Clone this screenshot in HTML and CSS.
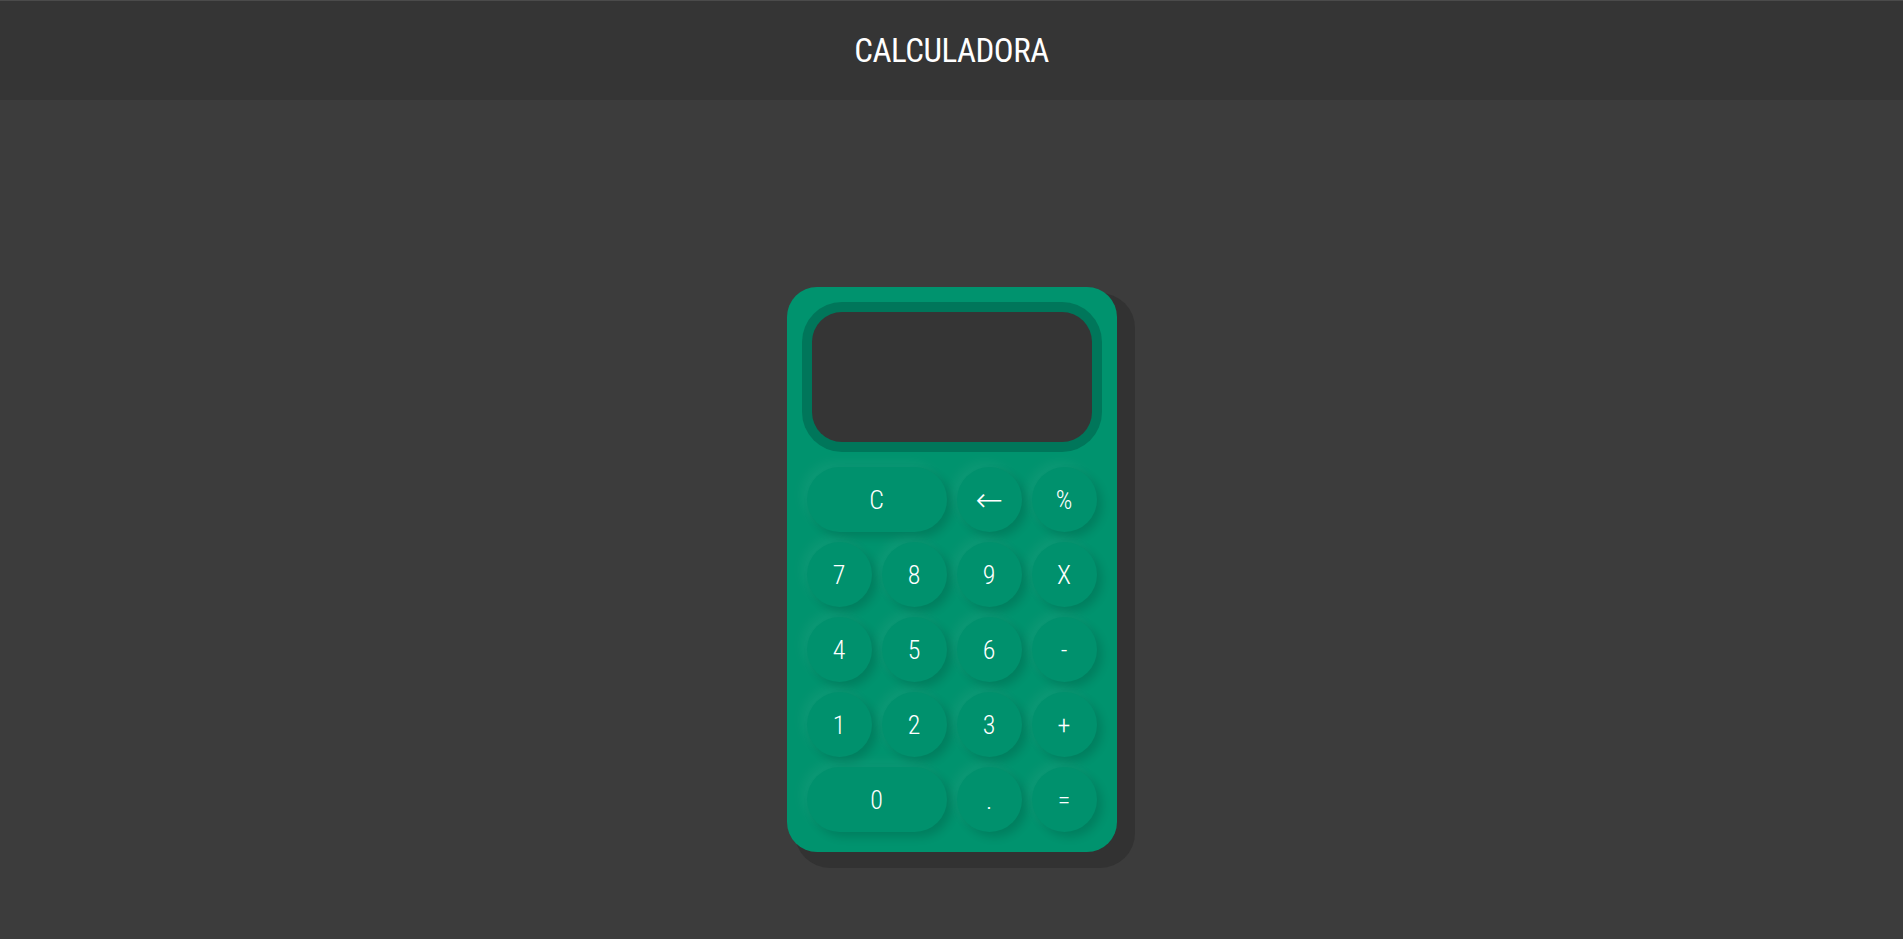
FILE: index.html
```html
<!DOCTYPE html>
<html lang="pt">
<head>
<meta charset="utf-8">
<title>Calculadora</title>
<link rel="stylesheet" href="styles.css">
</head>
<body>
<header class="topbar">
  <h1 class="title">CALCULADORA</h1>
</header>
<main class="stage">
  <div class="calc">
    <div class="screen-ring">
      <div class="screen"></div>
    </div>
    <div class="keys">
      <button class="key wide">C</button>
      <button class="key arrow">&larr;</button>
      <button class="key">%</button>
      <button class="key">7</button>
      <button class="key">8</button>
      <button class="key">9</button>
      <button class="key">X</button>
      <button class="key">4</button>
      <button class="key">5</button>
      <button class="key">6</button>
      <button class="key">-</button>
      <button class="key">1</button>
      <button class="key">2</button>
      <button class="key">3</button>
      <button class="key">+</button>
      <button class="key wide">0</button>
      <button class="key">.</button>
      <button class="key">=</button>
    </div>
  </div>
</main>
</body>
</html>
```
FILE: styles.css
```css
* { box-sizing: border-box; }
html, body { height: 100%; }
body {
  margin: 0;
  background: #3c3c3c;
  font-family: "Roboto", "Liberation Sans", sans-serif;
  overflow: hidden;
}
.topbar {
  height: 100px;
  background: #353535;
  border-top: 1px solid #4b4b4b;
  display: flex;
  align-items: center;
  justify-content: center;
}
.title {
  margin: 0;
  color: #ffffff;
  font-size: 33px;
  font-weight: 400;
  font-stretch: 75%;
  letter-spacing: -0.5px;
}
.stage {
  display: flex;
  justify-content: center;
  padding-top: 187px;
}
.calc {
  width: 330px;
  height: 565px;
  background: #00936e;
  border-radius: 30px;
  padding: 15px 0 20px;
  box-shadow: 13px 11px 0 5px #323232;
  display: flex;
  flex-direction: column;
  align-items: center;
}
.screen-ring {
  width: 300px;
  height: 150px;
  border-radius: 40px;
  background: #00765a;
  padding: 10px;
}
.screen {
  width: 100%;
  height: 100%;
  background: #353535;
  border-radius: 30px;
}
.keys {
  margin-top: 15px;
  display: grid;
  grid-template-columns: repeat(4, 65px);
  grid-auto-rows: 65px;
  gap: 10px;
}
.key {
  border: 0;
  border-radius: 33px;
  background: #00916d;
  color: #ffffff;
  font-family: "Roboto", "Liberation Sans", sans-serif;
  font-size: 26px;
  font-weight: 300;
  font-stretch: 75%;
  padding: 0;
  box-shadow: 5px 5px 10px rgba(0, 0, 0, 0.14), -5px -5px 12px rgba(255, 255, 255, 0.05);
}
.key.arrow {
  font-family: "DejaVu Sans", sans-serif;
  font-size: 33px;
  font-weight: 300;
  font-stretch: normal;
}
.key.wide {
  grid-column: span 2;
}
```
